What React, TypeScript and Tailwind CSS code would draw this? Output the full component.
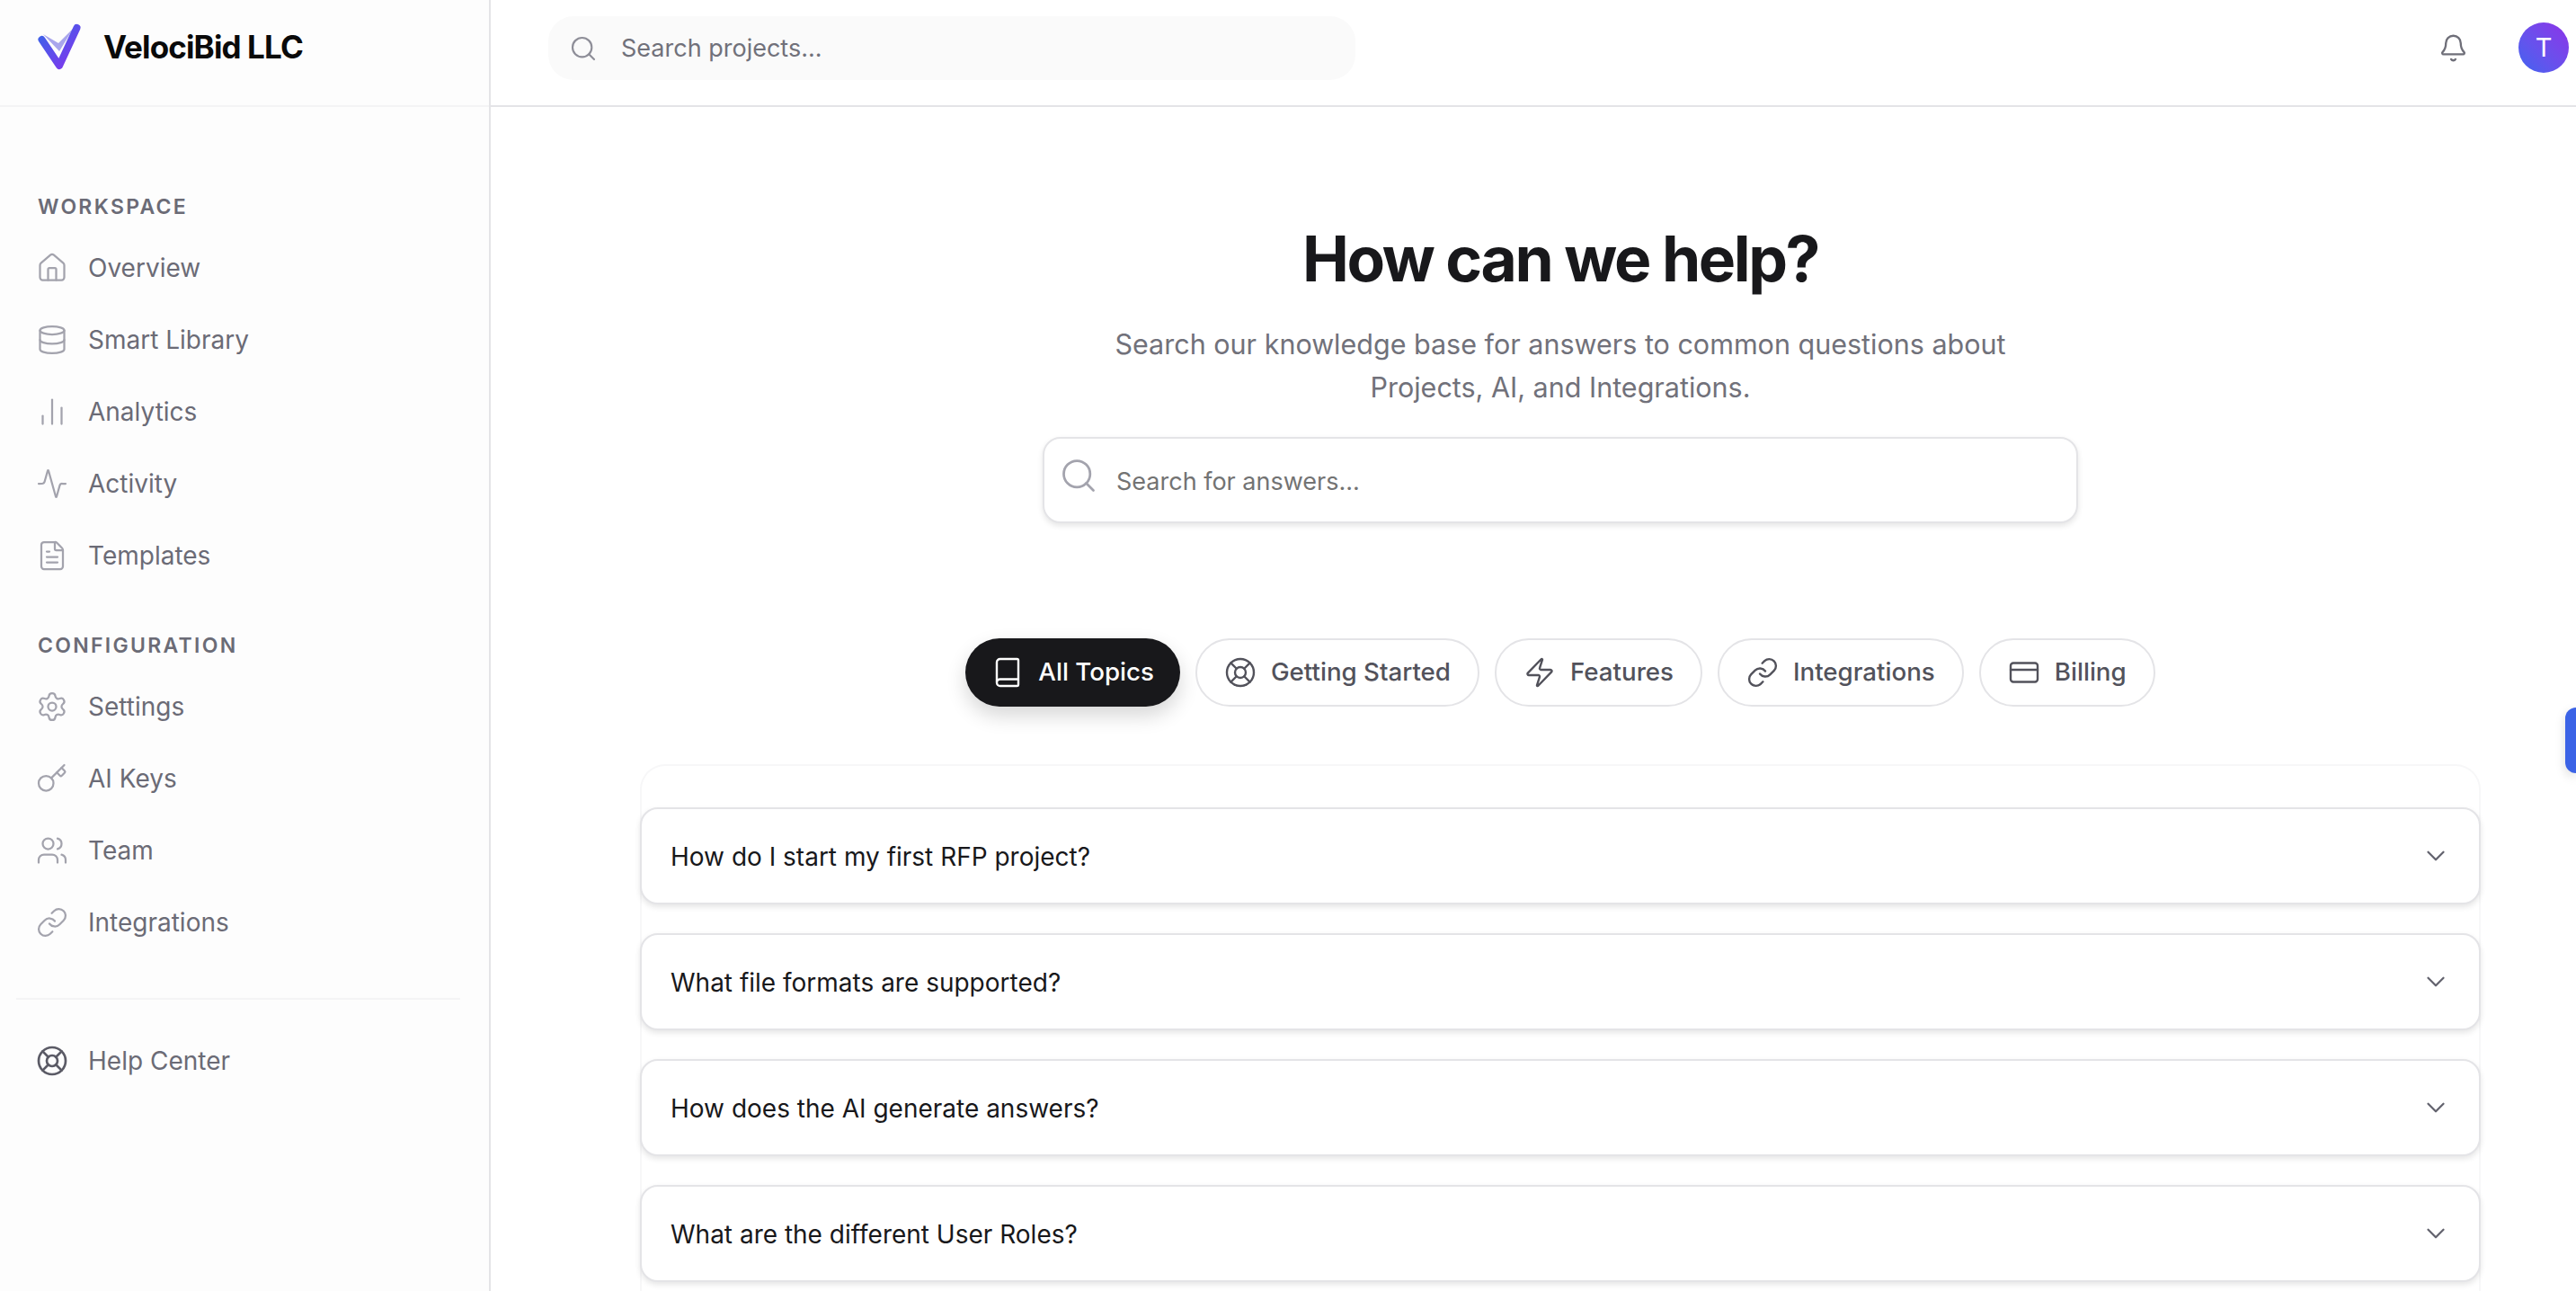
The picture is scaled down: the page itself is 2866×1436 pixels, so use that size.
import {
  Activity,
  Bell,
  Book,
  ChartNoAxesColumn,
  ChevronDown,
  CreditCard,
  Database,
  FileText,
  House,
  Key,
  LifeBuoy,
  Link,
  Search,
  Settings,
  Users,
  Zap,
} from 'lucide-react';

const workspaceItems = [
  { label: 'Overview', icon: House },
  { label: 'Smart Library', icon: Database },
  { label: 'Analytics', icon: ChartNoAxesColumn },
  { label: 'Activity', icon: Activity },
  { label: 'Templates', icon: FileText },
];

const configItems = [
  { label: 'Settings', icon: Settings },
  { label: 'AI Keys', icon: Key },
  { label: 'Team', icon: Users },
  { label: 'Integrations', icon: Link },
];

const topics = [
  { label: 'All Topics', icon: Book, active: true },
  { label: 'Getting Started', icon: LifeBuoy, active: false },
  { label: 'Features', icon: Zap, active: false },
  { label: 'Integrations', icon: Link, active: false },
  { label: 'Billing', icon: CreditCard, active: false },
];

const questions = [
  'How do I start my first RFP project?',
  'What file formats are supported?',
  'How does the AI generate answers?',
  'What are the different User Roles?',
];

function Logo() {
  return (
    <svg width="52" height="56" viewBox="40 24 52 56" fill="none" className="shrink-0">
      <defs>
        <linearGradient id="logoStroke" gradientUnits="userSpaceOnUse" x1="44" y1="36" x2="78" y2="72">
          <stop offset="0" stopColor="#3b63e8" />
          <stop offset="1" stopColor="#7c3aed" />
        </linearGradient>
      </defs>
      <path d="M48 38 L65 48 L82 31 L66 57 Z" fill="#a9a6ec" />
      <path
        d="M46.5 44 L66 73 L85.5 31"
        stroke="url(#logoStroke)"
        strokeWidth="8"
        strokeLinecap="round"
        strokeLinejoin="round"
      />
    </svg>
  );
}

function NavItem({ label, icon: Icon, dark }: { label: string; icon: typeof House; dark?: boolean }) {
  return (
    <a className="flex h-[80px] items-center gap-[22px] pl-[40px] text-[28px] text-[#6b6b76]">
      <Icon
        className={`h-[36px] w-[36px] shrink-0 ${dark ? 'text-[#5b5b66]' : 'text-[#a3a3ad]'}`}
        strokeWidth={dark ? 1.8 : 1.5}
      />
      {label}
    </a>
  );
}

function SectionLabel({ children }: { children: string }) {
  return (
    <p className="mb-[12px] h-[32px] pl-[42px] text-[23px] leading-[32px] font-semibold tracking-[0.1em] text-[#6b6b76]">
      {children}
    </p>
  );
}

export default function App() {
  return (
    <div className="flex h-screen overflow-hidden bg-white font-[Inter,sans-serif]">
      {/* Sidebar */}
      <aside className="flex w-[546px] shrink-0 flex-col border-r-2 border-[#e4e4e7] bg-[#fdfdfd]">
        <div className="flex h-[119px] items-start gap-[23px] border-b-2 border-[#f4f4f5] pt-[24px] pl-[40px]">
          <Logo />
          <span className="mt-[6px] text-[35px] leading-[44px] font-bold tracking-[-0.025em] text-[#0a0a0a]">
            VelociBid LLC
          </span>
        </div>

        <nav className="flex flex-col pt-[95px]">
          <SectionLabel>WORKSPACE</SectionLabel>
          {workspaceItems.map(item => (
            <NavItem key={item.label} {...item} />
          ))}

          <div className="h-[44px]" />
          <SectionLabel>CONFIGURATION</SectionLabel>
          {configItems.map(item => (
            <NavItem key={item.label} {...item} />
          ))}

          <div className="mt-[44px] mr-[32px] ml-[18px] border-t-2 border-[#f4f4f5]" />
          <div className="h-[28px]" />
          <NavItem label="Help Center" icon={LifeBuoy} dark />
        </nav>
      </aside>

      {/* Main */}
      <div className="relative flex min-w-0 flex-1 flex-col">
        <header className="flex h-[119px] shrink-0 items-start justify-between border-b-2 border-[#e4e4e7] pt-[18px] pr-[8px] pl-[64px]">
          <div className="flex h-[71px] w-[898px] items-center gap-[26px] rounded-[28px] bg-[#fafafa] pl-[23px]">
            <Search className="h-[32px] w-[32px] text-[#8e8e98]" strokeWidth={1.6} />
            <input
              placeholder="Search projects..."
              className="flex-1 bg-transparent pt-[2px] text-[27px] outline-none placeholder:text-[#71717a]"
            />
          </div>
          <div className="flex items-center gap-[56px] pt-[7px]">
            <Bell className="h-[33px] w-[33px] text-[#6f6f79]" strokeWidth={1.7} />
            <div className="flex h-[56px] w-[56px] items-center justify-center rounded-full bg-gradient-to-tr from-[#3b63f0] to-[#8b2fe8] text-[29px] font-normal text-white">
              T
            </div>
          </div>
        </header>

        <main className="flex min-h-0 flex-1 flex-col items-center overflow-hidden pt-[133px] pr-[106px] pl-[166px]">
          <h1 className="text-[69.5px] leading-[72px] font-bold tracking-[-0.035em] text-[#18181b]">
            How can we help?
          </h1>
          <p className="mt-[35px] w-[1100px] text-center text-[30.5px] leading-[48px] text-[#71717a]">
            Search our knowledge base for answers to common questions about Projects, AI, and Integrations.
          </p>

          <div className="mt-[31px] flex h-[96px] w-[1152px] shrink-0 items-center gap-[20px] rounded-[20px] border-2 border-[#e4e4e7] bg-white pb-[4px] pl-[16px] shadow-[0_3px_6px_rgba(0,0,0,0.1)]">
            <Search className="mb-[6px] h-[44px] w-[44px] text-[#a3a3ad]" strokeWidth={1.5} />
            <input
              placeholder="Search for answers..."
              className="flex-1 bg-transparent pt-[8px] text-[27px] outline-none placeholder:text-[#737373]"
            />
          </div>

          <div className="mt-[128px] flex shrink-0 gap-[17px]">
            {topics.map(({ label, icon: Icon, active }) => (
              <button
                key={label}
                className={`flex h-[76px] items-center gap-[16px] rounded-full text-[27.7px] font-medium ${
                  active
                    ? 'bg-[#18181b] px-[29px] text-white shadow-[0_10px_22px_rgba(0,0,0,0.16)]'
                    : 'border-2 border-[#e4e4e7] bg-white px-[30px] text-[#52525b]'
                }`}
              >
                <Icon className="h-[36px] w-[36px] shrink-0" strokeWidth={1.6} />
                {label}
              </button>
            ))}
          </div>

          <div className="mt-[64px] flex w-[2048px] flex-1 flex-col gap-[32px] rounded-t-[28px] border-x-2 border-t-2 border-[#f7f7f8] pt-[46px]">
            {questions.map(question => (
              <div
                key={question}
                className="-mx-[2px] flex h-[108px] shrink-0 items-center justify-between rounded-[20px] border-2 border-[#e4e4e7] bg-white pr-[31px] pl-[32px] shadow-[0_3px_6px_rgba(0,0,0,0.1)]"
              >
                <span className="pt-[1px] text-[28px] font-normal text-[#18181b]">{question}</span>
                <ChevronDown className="h-[34px] w-[34px] text-[#63636e]" strokeWidth={1.6} />
              </div>
            ))}
          </div>
        </main>

        {/* Feedback tab on the right edge */}
        <div className="absolute top-[787px] right-0 h-[73px] w-[12px] rounded-l-[16px] bg-[#3b63e6] shadow-[0_4px_12px_rgba(0,0,0,0.15)]" />
      </div>
    </div>
  );
}
